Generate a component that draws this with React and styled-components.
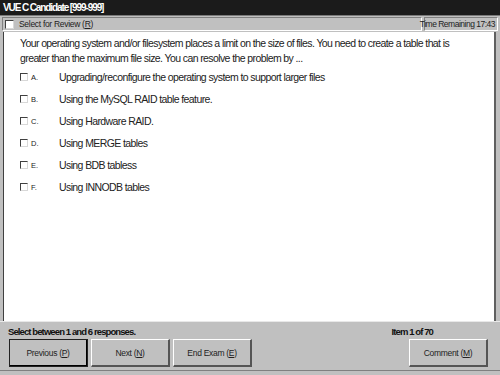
import React from "react";
import styled, { createGlobalStyle } from "styled-components";

const GlobalStyle = createGlobalStyle`
  html, body { margin: 0; padding: 0; background: #c0c0c0; }
  body {
    font-family: "Liberation Sans", Arial, sans-serif;
    color: #222;
  }
`;

const Window = styled.div`
  width: 500px;
  height: 375px;
  display: flex;
  flex-direction: column;
  background: #c0c0c0;
  overflow: hidden;
`;

const TitleBar = styled.div`
  flex: none;
  height: 15px;
  background: #1b1b1b;
  color: #fff;
  font-weight: bold;
  font-size: 10px;
  letter-spacing: -1.1px;
  line-height: 15px;
  padding-left: 3px;
  border-bottom: 1px solid #7a7a7a;
`;

const ToolBar = styled.div`
  flex: none;
  height: 14px;
  display: flex;
  justify-content: space-between;
  align-items: stretch;
  padding: 1px 2px 0 2px;
  gap: 2px;
`;

const Panel = styled.div`
  display: flex;
  align-items: center;
  gap: 5px;
  padding: 0 2px;
  font-size: ${(p) => p.$font}px;
  letter-spacing: ${(p) => p.$spacing}px;
  white-space: nowrap;
  border-top: 1px solid #808080;
  border-left: 1px solid #808080;
  border-bottom: 1px solid #fff;
  border-right: 1px solid #fff;
  flex: ${(p) => (p.$grow ? 1 : "none")};
  width: ${(p) => (p.$width ? p.$width + "px" : "auto")};
  justify-content: ${(p) => (p.$right ? "flex-end" : "flex-start")};
`;

const Box = styled.span`
  display: inline-block;
  box-sizing: border-box;
  width: ${(p) => p.$size}px;
  height: ${(p) => p.$size}px;
  background: #fff;
  border-top: 1px solid #404040;
  border-left: 1px solid #404040;
  border-bottom: 1px solid #d8d8d8;
  border-right: 1px solid #d8d8d8;
  flex: none;
`;

const Content = styled.div`
  flex: 1;
  min-height: 0;
  margin: 1px 4px 0 3px;
  background: #fff;
  border-left: 1px solid #404040;
  border-right: 2px solid #606060;
  padding: 4px 0 0 16px;
`;

const Question = styled.p`
  margin: 0 0 1px 0;
  font-size: 10.5px;
  letter-spacing: -0.6px;
  line-height: 14.5px;
  width: 440px;
`;

const Options = styled.div`
  display: flex;
  flex-direction: column;
`;

const Option = styled.div`
  display: flex;
  align-items: center;
  height: 22px;
`;

const Letter = styled.span`
  font-size: 7.5px;
  margin-left: 3px;
  width: 28px;
`;

const OptionText = styled.span`
  font-size: 10.5px;
  letter-spacing: -0.6px;
`;

const Footer = styled.div`
  flex: none;
  display: flex;
  flex-direction: column;
  border-top: 1px solid #e8e8e8;
  border-bottom: 1px solid #808080;
  padding: 2px 0 3px 0;
  margin-bottom: 4px;
`;

const InfoRow = styled.div`
  display: flex;
  justify-content: space-between;
  align-items: center;
  height: 14px;
  padding: 0 67px 0 8px;
  font-size: 9.5px;
  letter-spacing: -0.9px;
  font-weight: bold;
  color: #111;
`;

const ButtonRow = styled.div`
  display: flex;
  gap: 3px;
  padding: 1px 12px 0 9px;
`;

const Spacer = styled.div`
  flex: 1;
`;

const Button = styled.button`
  width: 79px;
  height: 28px;
  box-sizing: border-box;
  background: #c0c0c0;
  font-family: inherit;
  font-size: 8.5px;
  letter-spacing: -0.3px;
  color: #222;
  padding: 0;
  border-top: 1px solid #fff;
  border-left: 1px solid #fff;
  border-right: ${(p) => (p.$default ? "2px solid #000" : "2px solid #555")};
  border-bottom: ${(p) => (p.$default ? "2px solid #000" : "2px solid #555")};
  outline: ${(p) => (p.$default ? "1px solid #222" : "none")};
  outline-offset: -1px;
  u { text-decoration: underline; }
`;

const options = [
  ["A.", "Upgrading/reconfigure the operating system to support larger files"],
  ["B.", "Using the MySQL RAID table feature."],
  ["C.", "Using Hardware RAID."],
  ["D.", "Using MERGE tables"],
  ["E.", "Using BDB tabless"],
  ["F.", "Using INNODB tables"],
];

export default function App() {
  return (
    <Window>
      <GlobalStyle />
      <TitleBar>VUE C Candidate [999-999]</TitleBar>
      <ToolBar>
        <Panel $grow $font={8.5} $spacing={-0.3}>
          <Box $size={9} />
          <span>
            Select for Review (<u>R</u>)
          </span>
        </Panel>
        <Panel $width={68} $right $font={8.5} $spacing={-0.5}>
          Time Remaining 17:43
        </Panel>
      </ToolBar>
      <Content>
        <Question>
          Your operating system and/or filesystem places a limit on the size of
          files. You need to create a table that is greater than the maximum
          file size. You can resolve the problem by ...
        </Question>
        <Options>
          {options.map(([letter, text]) => (
            <Option key={letter}>
              <Box $size={8} />
              <Letter>{letter}</Letter>
              <OptionText>{text}</OptionText>
            </Option>
          ))}
        </Options>
      </Content>
      <Footer>
        <InfoRow>
          <span>Select between 1 and 6 responses.</span>
          <span>Item 1 of 70</span>
        </InfoRow>
        <ButtonRow>
          <Button $default>
            Previous (<u>P</u>)
          </Button>
          <Button>
            Next (<u>N</u>)
          </Button>
          <Button>
            End Exam (<u>E</u>)
          </Button>
          <Spacer />
          <Button>
            Comment (<u>M</u>)
          </Button>
        </ButtonRow>
      </Footer>
    </Window>
  );
}
